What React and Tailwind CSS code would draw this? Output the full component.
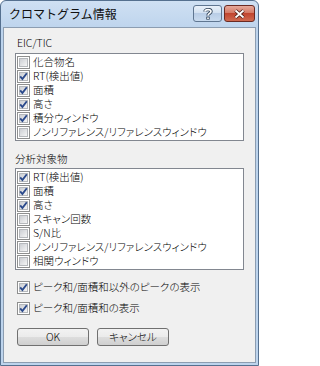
import React from 'react';

const jp = "font-['Noto_Sans_CJK_JP','Noto_Sans',sans-serif]";

const Check = ({ checked }) => (
  <svg width="13" height="13" viewBox="0 0 13 13" className="shrink-0">
    <defs>
      <linearGradient id="cbIn" x1="0" y1="0" x2="1" y2="1">
        <stop offset="0" stopColor="#c9ccd1" />
        <stop offset="1" stopColor="#f7f7f7" />
      </linearGradient>
    </defs>
    <rect x="0.5" y="0.5" width="12" height="12" fill="#fff" stroke="#8e8f8f" />
    <rect x="2.5" y="2.5" width="8" height="8" fill="url(#cbIn)" stroke="#b5b8bc" />
    {checked && (
      <path d="M3.2 6.4 L5.4 9 L9.8 3.2" fill="none" stroke="#2b4a8c" strokeWidth="1.9" />
    )}
  </svg>
);

const Row = ({ label, checked }) => (
  <div className="flex items-center h-[14px] pl-[1px] gap-[3px]">
    <Check checked={checked} />
    <span className="inline-block h-[14px] overflow-hidden text-[10.5px] leading-[14px] font-light text-black [font-feature-settings:'palt'] whitespace-nowrap">{label}</span>
  </div>
);

const ListBox = ({ items, className }) => (
  <div className={`mx-[11px] border border-[#828790] bg-white py-[1px] ${className}`}>
    {items.map(([label, checked]) => (
      <Row key={label} label={label} checked={checked} />
    ))}
  </div>
);

const Button = ({ children }) => (
  <button className="w-[72px] h-[18px] rounded-[3px] border border-[#707070] bg-[linear-gradient(#f2f2f2_0%,#ebebeb_50%,#dddddd_51%,#cfcfcf_100%)] text-[10.5px] leading-[14px] font-light text-black [font-feature-settings:'palt'] flex items-center justify-center">
    {children}
  </button>
);

const eicItems = [
  ['化合物名', false],
  ['RT(検出値)', true],
  ['面積', true],
  ['高さ', true],
  ['積分ウィンドウ', true],
  ['ノンリファレンス/リファレンスウィンドウ', false],
];

const targetItems = [
  ['RT(検出値)', true],
  ['面積', true],
  ['高さ', true],
  ['スキャン回数', false],
  ['S/N比', false],
  ['ノンリファレンス/リファレンスウィンドウ', false],
  ['相関ウィンドウ', false],
];

export default function App() {
  return (
    <div className={`w-[259px] h-[366px] flex flex-col border border-[#55708f] rounded-t-[6px] bg-[linear-gradient(#cfe0f3,#bcd3ec_30px,#bdd4ed)] px-[2px] pb-[2px] ${jp}`}>
      {/* title bar */}
      <div className="h-[26px] flex items-start shrink-0">
        <span className="ml-[6px] mt-[5px] text-[12px] leading-[16px] text-[#111] whitespace-nowrap">クロマトグラム情報</span>
        <div className="ml-auto mt-[4px] mr-[1px] flex gap-[2px]">
          <div className="w-[29px] h-[17px] rounded-[3px] border border-[#5f7691] bg-[linear-gradient(#e9f1fa,#d3e1f1_45%,#b9cde6_50%,#c9dbef)] flex items-center justify-center">
            <svg width="10" height="12" viewBox="0 0 10 12">
              <path d="M2 3.6 C2 1 8 1 8 3.6 C8 5.4 5 5.4 5 7.4" fill="none" stroke="#34465c" strokeWidth="3.4" />
              <rect x="3.3" y="8.6" width="3.4" height="3" fill="#34465c" />
              <path d="M2 3.6 C2 1 8 1 8 3.6 C8 5.4 5 5.4 5 7.4" fill="none" stroke="#fff" strokeWidth="1.6" />
              <rect x="4.2" y="9.4" width="1.6" height="1.6" fill="#fff" />
            </svg>
          </div>
          <div className="w-[31px] h-[17px] rounded-[3px] border border-[#6a2a22] bg-[linear-gradient(#e6a99b,#d47a66_45%,#c1452f_50%,#cf6a50)] flex items-center justify-center">
            <svg width="13" height="10" viewBox="0 0 13 10">
              <path d="M2.5 1.5 L10.5 8.5 M10.5 1.5 L2.5 8.5" stroke="#4a1d17" strokeWidth="3.6" />
              <path d="M2.5 1.5 L10.5 8.5 M10.5 1.5 L2.5 8.5" stroke="#fff" strokeWidth="1.8" />
            </svg>
          </div>
        </div>
      </div>

      {/* client area */}
      <div className="flex-1 border border-[#8c9db1] bg-[#f0f0f0] flex flex-col text-black">
        <div className="mt-[8px] ml-[13px] text-[10.5px] leading-[14px] font-light">EIC/TIC</div>
        <ListBox items={eicItems} className="mt-[3px]" />

        <div className="mt-[11px] ml-[11px] text-[10.5px] leading-[14px] font-light">分析対象物</div>
        <ListBox items={targetItems} className="mt-[2px]" />

        <div className="mt-[10px] ml-[12px] flex flex-col gap-[7px]">
          <Row label="ピーク和/面積和以外のピークの表示" checked />
          <Row label="ピーク和/面積和の表示" checked />
        </div>

        <div className="mt-[13px] ml-[13px] flex gap-[8px]">
          <Button>OK</Button>
          <Button>キャンセル</Button>
        </div>
      </div>
    </div>
  );
}
